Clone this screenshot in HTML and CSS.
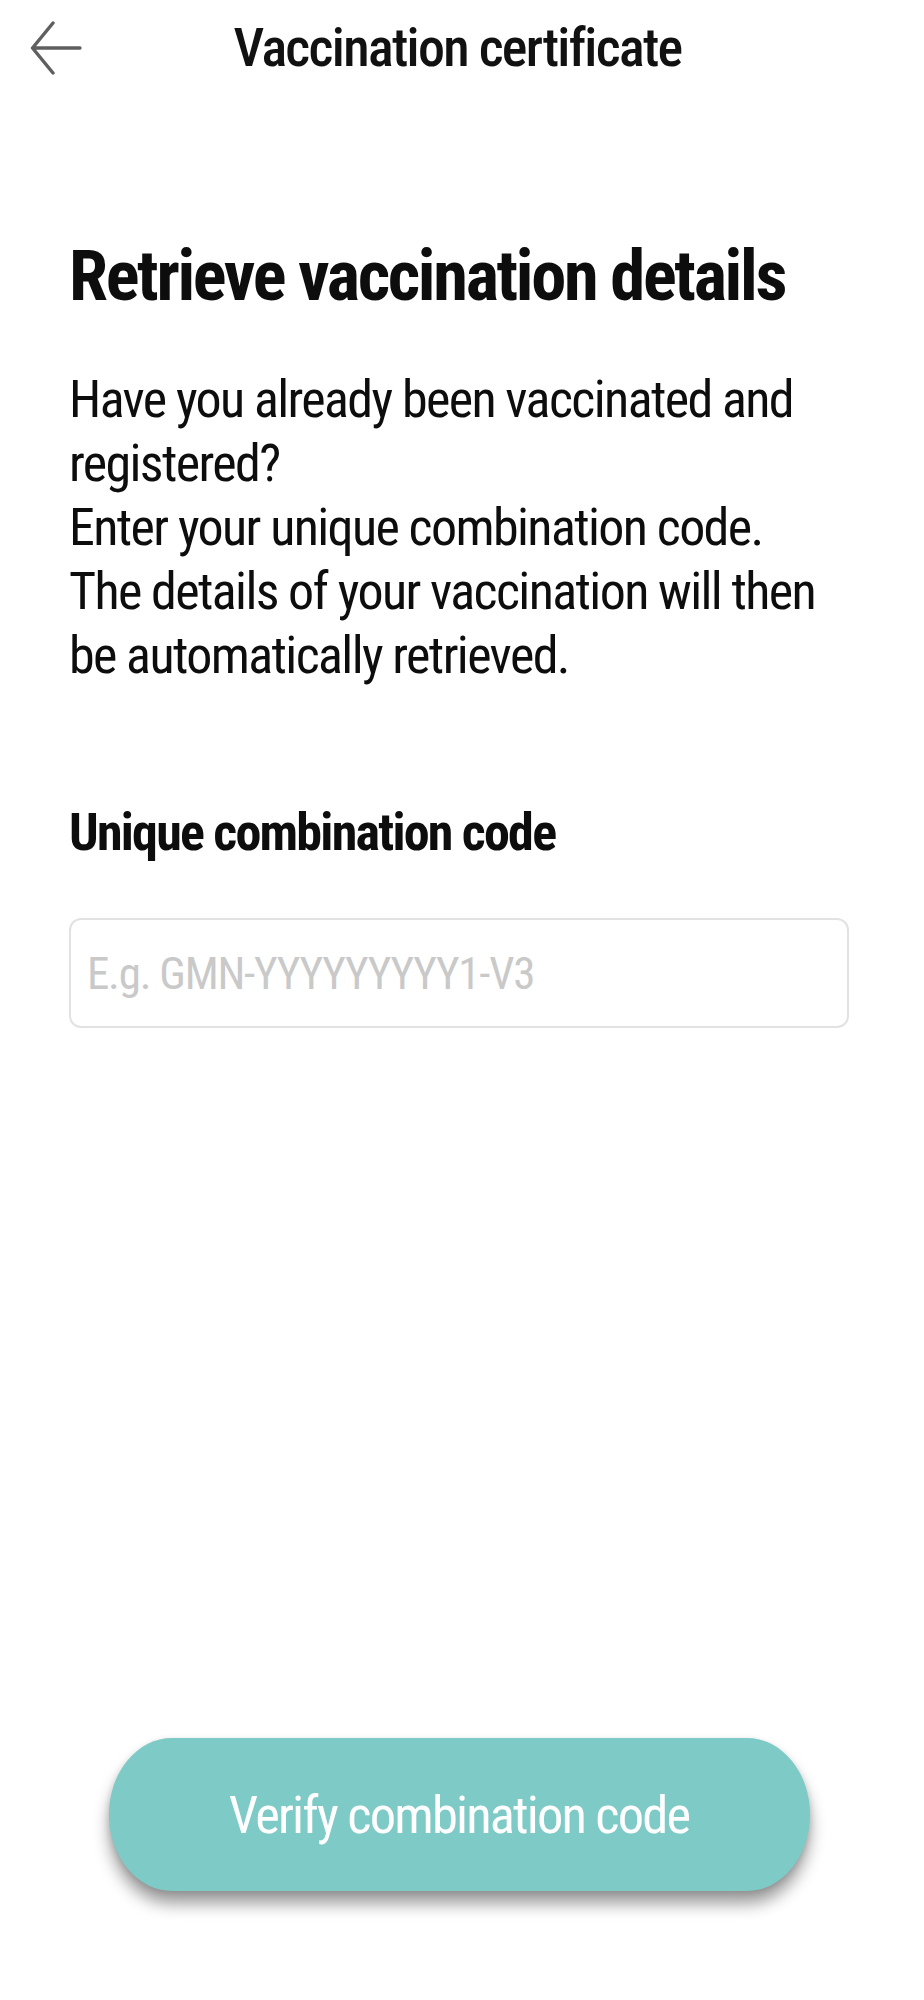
FILE: index.html
```html
<!DOCTYPE html>
<html lang="en">
<head>
  <meta charset="UTF-8">
  <meta name="viewport" content="width=device-width, initial-scale=1.0">
  <title>Vaccination certificate</title>
  <link rel="stylesheet" href="styles.css">
</head>
<body>
  <div class="screen">
    <header class="topbar">
      <a class="back" href="#" aria-label="Back">
        <svg width="52" height="54" viewBox="0 0 52 54">
          <path d="M50 27 H3 M23 2 L2.5 27 L23 52" fill="none" stroke="#5f5f5f" stroke-width="3.4" stroke-linecap="round" stroke-linejoin="round"/>
        </svg>
      </a>
      <h1 class="topbar-title">Vaccination certificate</h1>
      <span></span>
    </header>

    <main class="content">
      <h2 class="heading">Retrieve vaccination details</h2>
      <p class="intro">
        Have you already been vaccinated and registered?<br>
        Enter your unique combination code.<br>
        The details of your vaccination will then be automatically retrieved.
      </p>

      <label class="field-label" for="code">Unique combination code</label>
      <input class="field" id="code" type="text" placeholder="E.g. GMN-YYYYYYYYY1-V3">

      <button class="verify" type="button">Verify combination code</button>
    </main>
  </div>
</body>
</html>
```

FILE: styles.css
```css
html, body {
  margin: 0;
  padding: 0;
  background-color: #ffffff;
}

body {
  font-family: Roboto, "Roboto Condensed", "Liberation Sans", sans-serif;
  font-stretch: condensed;
  color: #0d0d0d;
}

.screen {
  min-height: 2000px;
  display: flex;
  flex-direction: column;
}

.topbar {
  height: 96px;
  display: grid;
  grid-template-columns: 1fr auto 1fr;
  align-items: center;
  padding: 0 39px 0 30px;
}

.back {
  display: flex;
  width: 52px;
  height: 54px;
}

.topbar-title {
  margin: 0;
  font-size: 54px;
  font-weight: 500;
  line-height: 70px;
  letter-spacing: -0.031em;
  color: #111;
}

.content {
  flex-grow: 1;
  display: flex;
  flex-direction: column;
  padding: 0 75px 109px 69px;
}

.heading {
  margin: 137px 0 0;
  font-size: 70.5px;
  font-weight: 700;
  line-height: 86px;
  letter-spacing: -0.033em;
}

.intro {
  margin: 49px 0 0;
  font-size: 52px;
  line-height: 64px;
  font-weight: 400;
  letter-spacing: -0.031em;
}

.field-label {
  margin-top: 113px;
  font-size: 52px;
  font-weight: 700;
  line-height: 64px;
  letter-spacing: -0.034em;
}

.field {
  margin-top: 53px;
  height: 110px;
  box-sizing: border-box;
  border: 2px solid #e2e2e2;
  border-radius: 12px;
  padding: 0 16px;
  font-family: inherit;
  font-stretch: inherit;
  font-size: 45px;
  letter-spacing: -0.028em;
  color: #222;
  background-color: #fff;
  outline: none;
}

.field::placeholder {
  color: #c9c9c9;
}

.verify {
  margin-top: auto;
  align-self: center;
  width: 701px;
  height: 153px;
  border: none;
  border-radius: 63px / 76.5px;
  background-color: #7dcac6;
  color: #ffffff;
  font-family: inherit;
  font-stretch: inherit;
  font-size: 52.5px;
  font-weight: 400;
  letter-spacing: -0.035em;
  box-shadow: 0 13px 16px rgba(0, 0, 0, 0.38), 0 2px 6px rgba(0, 0, 0, 0.12);
  cursor: pointer;
}
```
